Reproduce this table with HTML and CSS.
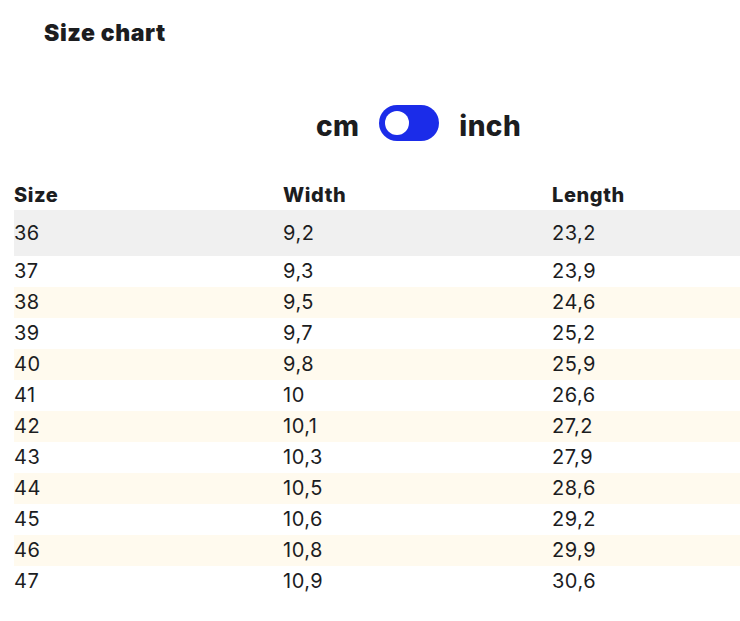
FILE: index.html
```html
<!DOCTYPE html>
<html>
<head>
<meta charset="utf-8">
<link rel="stylesheet" href="styles.css">
</head>
<body>
<div class="page">
  <h2 class="title">Size chart</h2>
  <div class="units">
    <span class="unit">cm</span>
    <span class="switch"><span class="knob"></span></span>
    <span class="unit">inch</span>
  </div>
  <table class="chart">
    <colgroup><col class="c1"><col class="c2"><col class="c3"></colgroup>
    <thead>
      <tr><th>Size</th><th>Width</th><th>Length</th></tr>
    </thead>
    <tbody>
      <tr class="active"><td>36</td><td>9,2</td><td>23,2</td></tr>
      <tr><td>37</td><td>9,3</td><td>23,9</td></tr>
      <tr class="alt"><td>38</td><td>9,5</td><td>24,6</td></tr>
      <tr><td>39</td><td>9,7</td><td>25,2</td></tr>
      <tr class="alt"><td>40</td><td>9,8</td><td>25,9</td></tr>
      <tr><td>41</td><td>10</td><td>26,6</td></tr>
      <tr class="alt"><td>42</td><td>10,1</td><td>27,2</td></tr>
      <tr><td>43</td><td>10,3</td><td>27,9</td></tr>
      <tr class="alt"><td>44</td><td>10,5</td><td>28,6</td></tr>
      <tr><td>45</td><td>10,6</td><td>29,2</td></tr>
      <tr class="alt"><td>46</td><td>10,8</td><td>29,9</td></tr>
      <tr><td>47</td><td>10,9</td><td>30,6</td></tr>
    </tbody>
  </table>
</div>
</body>
</html>
```
FILE: styles.css
```css
html, body {
  margin: 0;
  padding: 0;
  background: #ffffff;
}
body {
  font-family: Inter, "Noto Sans", sans-serif;
  color: #1c1d1f;
}
.page {
  width: 726px;
  margin-left: 14px;
}
.title {
  margin: 0;
  padding: 19px 0 0 30px;
  font-size: 23px;
  line-height: 28px;
  font-weight: 900;
  letter-spacing: 0.6px;
}
.units {
  display: flex;
  justify-content: center;
  align-items: center;
  gap: 20px;
  margin-top: 58px;
  padding-left: 83px;
  height: 36px;
}
.unit {
  font-size: 28px;
  font-weight: 800;
  line-height: 36px;
  letter-spacing: 0.4px;
  position: relative;
  top: 3px;
}
.switch {
  width: 60px;
  height: 36px;
  border-radius: 18px;
  background: #1b2ce9;
  display: flex;
  align-items: center;
  padding-left: 6px;
  box-sizing: border-box;
}
.knob {
  width: 24px;
  height: 24px;
  border-radius: 50%;
  background: #ffffff;
}
.chart {
  width: 726px;
  border-collapse: collapse;
  table-layout: fixed;
  margin-top: 39px;
}
.c1, .c2 { width: 269px; }
.c3 { width: 188px; }
.chart th {
  text-align: left;
  font-size: 20px;
  font-weight: 800;
  letter-spacing: 0.6px;
  height: 30px;
  padding: 0;
  line-height: 30px;
}
.chart td {
  padding: 0;
  font-size: 20px;
  letter-spacing: 0.5px;
  height: 31px;
  line-height: 31px;
  font-weight: 400;
}
.chart tr.active td {
  background: #f0f0f0;
  height: 46px;
}
.chart tr.alt td {
  background: #fffaee;
}
```
